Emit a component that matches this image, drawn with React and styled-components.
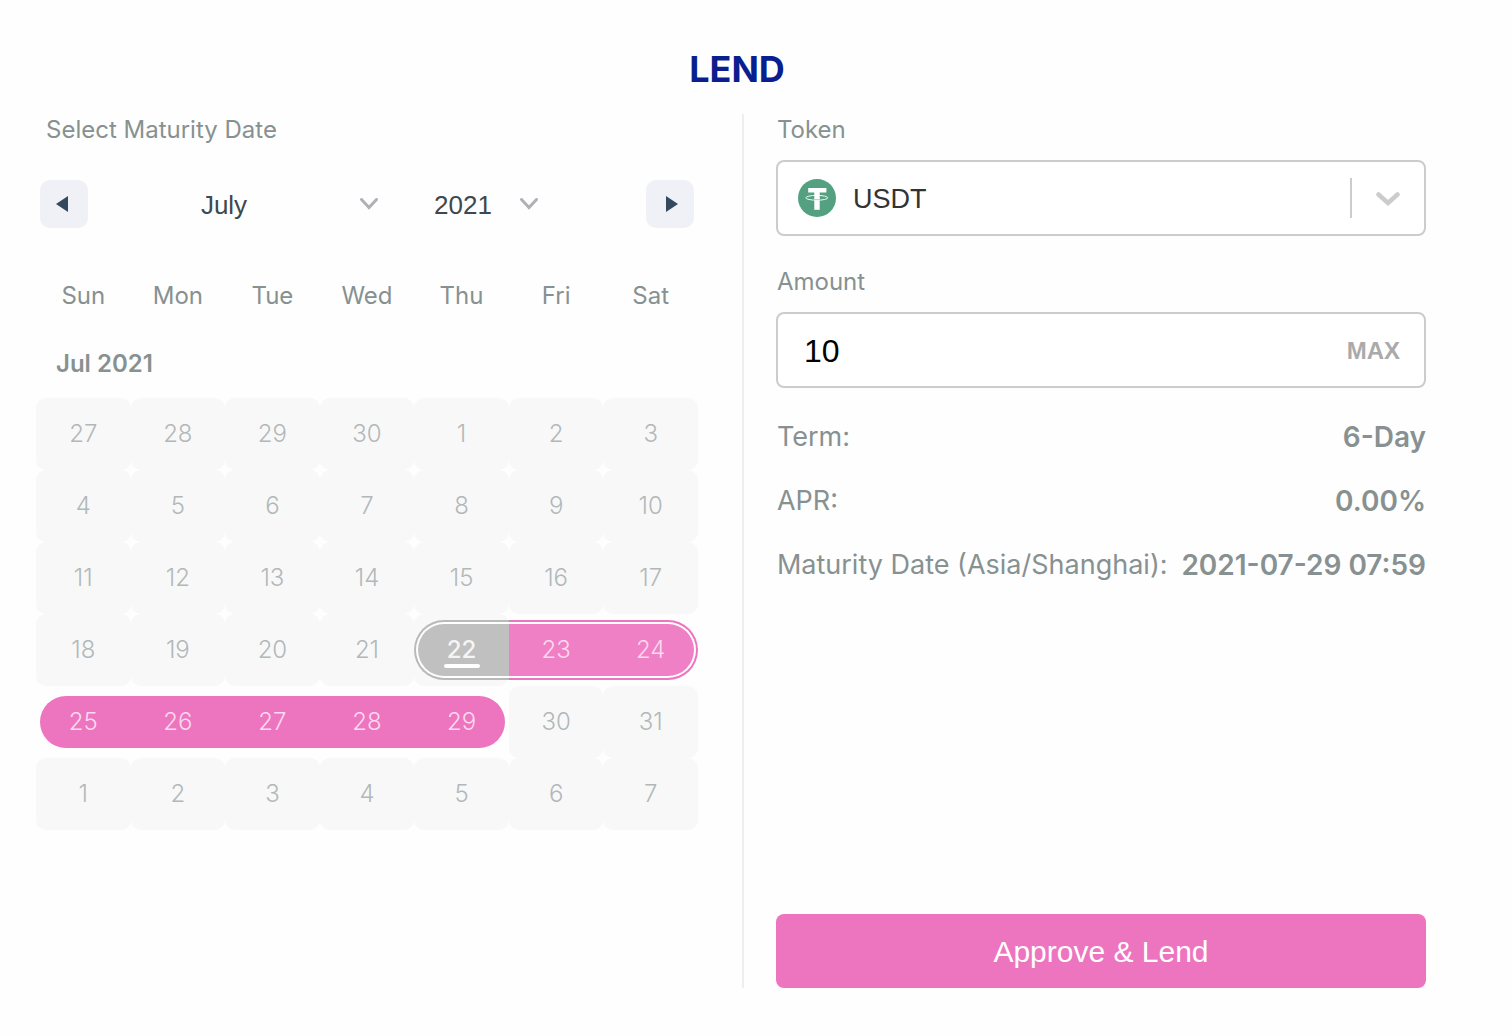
import React, { useState } from 'react';
import styled, { createGlobalStyle, css } from 'styled-components';

const GlobalStyle = createGlobalStyle`
  * {
    box-sizing: border-box;
  }

  body {
    margin: 0;
    background: #fefefe;
    color: #879191;
    font-family: Inter, sans-serif;
    font-size: 24px;
  }

  button,
  input,
  select {
    margin: 0;
    font-family: 'Liberation Sans', sans-serif;
  }
`;

const Page = styled.main`
  display: flex;
  flex-direction: column;
  min-height: 100vh;
  padding: 48px 74px 48px 36px;
`;

const Title = styled.h1`
  margin: 0 0 24px;
  color: #0a1f8f;
  font-size: 36px;
  font-weight: 700;
  line-height: 42px;
  text-align: center;
`;

const Columns = styled.div`
  display: grid;
  grid-template-columns: minmax(0, 51fr) minmax(0, 50fr);
  flex: 1;
`;

const DatePanel = styled.section`
  padding-right: 44px;
  border-right: 2px solid #eeeeee;
`;

const FormPanel = styled.form`
  display: flex;
  flex-direction: column;
  padding: 0 12px 0 32px;
`;

const PanelTitle = styled.h2`
  margin: 0 0 34px;
  padding-left: 10px;
  font-size: 24px;
  font-weight: 400;
  line-height: 32px;
`;

const CalendarHeader = styled.div`
  display: flex;
  align-items: center;
  justify-content: space-between;
  padding: 0 4px;
  margin-bottom: 50px;
`;

const ArrowButton = styled.button`
  display: flex;
  align-items: center;
  justify-content: center;
  width: 48px;
  height: 48px;
  padding: 0;
  border: none;
  border-radius: 10px;
  background: #f0f1f6;
  cursor: pointer;
`;

const Pickers = styled.div`
  display: flex;
  flex: 1;
  padding-left: 6px;
  gap: 18px;
`;

const Picker = styled.div`
  position: relative;
  flex: 0 1 ${({ width }) => width};

  svg {
    position: absolute;
    top: 18px;
    right: 16px;
    pointer-events: none;
  }
`;

const PickerSelect = styled.select`
  appearance: none;
  width: 100%;
  height: 48px;
  padding: 2px 60px 0 20px;
  border: none;
  background: transparent;
  color: #3e484f;
  font-size: 26px;
  text-align: center;
  text-align-last: center;
`;

const Weekdays = styled.div`
  display: grid;
  grid-template-columns: repeat(7, 1fr);
  font-size: 24px;
  line-height: 36px;
  text-align: center;
`;

const MonthName = styled.h3`
  margin: 32px 0 16px;
  padding-left: 20px;
  font-size: 24px;
  font-weight: 600;
  line-height: 36px;
`;

const Days = styled.div`
  display: grid;
  grid-template-columns: repeat(7, 1fr);
  grid-auto-rows: 72px;
`;

const leftRound = css`
  border-top-left-radius: 30px;
  border-bottom-left-radius: 30px;
`;

const rightRound = css`
  border-top-right-radius: 30px;
  border-bottom-right-radius: 30px;
`;

const DayButton = styled.button`
  position: relative;
  padding: 0 0 2px;
  border: none;
  border-radius: 10px;
  background: ${({ $passive }) => ($passive ? '#f8f8f8' : 'transparent')};
  color: ${({ $range }) => ($range ? '#fbd9ee' : '#b2b8ba')};
  font-family: Inter, sans-serif;
  font-size: 24px;
  font-weight: 300;
  cursor: pointer;

  ${({ $today }) =>
    $today &&
    css`
      color: #f5f5f5;
      font-weight: 500;
    `}
`;

const Fill = styled.span`
  position: absolute;
  inset: 10px 0;
  left: ${({ $first }) => ($first ? '4px' : '0')};
  right: ${({ $last }) => ($last ? '4px' : '0')};
  background: ${({ $color }) => $color};
  ${({ $first }) => $first && leftRound}
  ${({ $last }) => $last && rightRound}
`;

const Ring = styled.span`
  position: absolute;
  inset: 6px 0;
  border: solid ${({ $color }) => $color};
  border-width: 2px 0;
  background: #ffffff;

  ${({ $first }) =>
    $first &&
    css`
      border-left-width: 2px;
      ${leftRound}
    `}

  ${({ $last }) =>
    $last &&
    css`
      border-right-width: 2px;
      ${rightRound}
    `}
`;

const DayNumber = styled.span`
  position: relative;
`;

const TodayMark = styled.span`
  position: absolute;
  bottom: 18px;
  left: 50%;
  width: 36px;
  height: 4px;
  border-radius: 2px;
  background: #ffffff;
  transform: translateX(-50%);
`;

const Label = styled.label`
  margin-bottom: 14px;
  padding-left: 1px;
  font-size: 24px;
  line-height: 32px;
`;

const Field = styled.div`
  position: relative;
  display: flex;
  align-items: center;
  height: 76px;
  margin-bottom: 30px;
  border: 2px solid #cccccc;
  border-radius: 8px;
  background: #ffffff;
`;

const TokenSelect = styled.select`
  appearance: none;
  width: 100%;
  height: 100%;
  padding: 2px 92px 0 75px;
  border: none;
  border-radius: 8px;
  background: transparent;
  color: #333333;
  font-size: 27px;
`;

const TokenIcon = styled.svg`
  position: absolute;
  left: 20px;
  top: 17px;
  pointer-events: none;
`;

const Indicator = styled.span`
  position: absolute;
  top: 16px;
  right: 0;
  display: flex;
  align-items: center;
  justify-content: center;
  width: 74px;
  height: 40px;
  border-left: 2px solid #cccccc;
  pointer-events: none;
`;

const AmountInput = styled.input`
  flex: 1;
  min-width: 0;
  height: 100%;
  padding: 2px 0 0 26px;
  border: none;
  border-radius: 8px;
  background: transparent;
  color: #000000;
  font-size: 32px;
`;

const MaxButton = styled.button`
  padding: 10px 24px 8px;
  border: none;
  background: transparent;
  color: #aaaaaa;
  font-size: 24px;
  font-weight: 700;
  cursor: pointer;
`;

const Details = styled.dl`
  display: flex;
  flex-direction: column;
  gap: 30px;
  margin: 2px 0 32px;
`;

const DetailRow = styled.div`
  display: flex;
  justify-content: space-between;
  padding-left: 1px;
  font-size: 27px;
  line-height: 34px;
  white-space: nowrap;

  dd {
    margin: 0;
    font-size: 28px;
    font-weight: 600;
  }
`;

const SubmitButton = styled.button`
  height: 74px;
  margin-top: auto;
  padding: 2px 0 0;
  border: none;
  border-radius: 8px;
  background: #ed75bf;
  color: #ffffff;
  font-size: 30px;
  cursor: pointer;
`;

const PINK = '#ed75bf';
const LIGHT_PINK = '#f080c5';
const GREY = '#c0c0c0';

const WEEKDAYS = ['Sun', 'Mon', 'Tue', 'Wed', 'Thu', 'Fri', 'Sat'];

const MONTHS = [
  'January',
  'February',
  'March',
  'April',
  'May',
  'June',
  'July',
  'August',
  'September',
  'October',
  'November',
  'December',
];

const getDays = () =>
  Array.from({ length: 42 }, (_, i) => {
    const date = new Date(2021, 5, 27 + i);
    const day = date.getDate();
    const range = date.getMonth() === 6 && day >= 22 && day <= 29;
    return {
      key: i,
      day,
      range,
      today: range && day === 22,
      ring: range && day <= 24,
      first: day === 22 || day === 25,
      last: day === 24 || day === 29,
    };
  });

const details = [
  { label: 'Term:', value: '6-Day' },
  { label: 'APR:', value: '0.00%' },
  { label: 'Maturity Date (Asia/Shanghai):', value: '2021-07-29 07:59' },
];

const Chevron = () => (
  <svg width="18" height="12" viewBox="0 0 18 12" fill="none">
    <path
      d="M1.5 1.5 9 9.5l7.5-8"
      stroke="#aeb1b5"
      strokeWidth="3"
      strokeLinecap="round"
    />
  </svg>
);

const Day = ({ day, range, today, ring, first, last }) => {
  let color = ring ? LIGHT_PINK : PINK;
  if (today) color = GREY;

  return (
    <DayButton type="button" $passive={!range || today} $range={range} $today={today}>
      {ring && <Ring $color={today ? '#b9b9b9' : PINK} $first={first} $last={last} />}
      {range && <Fill $color={color} $first={first} $last={last} />}
      <DayNumber>{day}</DayNumber>
      {today && <TodayMark />}
    </DayButton>
  );
};

const Calendar = () => {
  const [month, setMonth] = useState('July');
  const [year, setYear] = useState('2021');

  return (
    <>
      <CalendarHeader>
        <ArrowButton type="button" aria-label="Previous month">
          <svg width="24" height="24" viewBox="0 0 24 24">
            <path d="M16 4v16L4 12z" fill="#34495e" />
          </svg>
        </ArrowButton>
        <Pickers>
          <Picker width="300px">
            <PickerSelect
              aria-label="Month"
              value={month}
              onChange={(e) => setMonth(e.target.value)}
            >
              {MONTHS.map((name) => (
                <option key={name}>{name}</option>
              ))}
            </PickerSelect>
            <Chevron />
          </Picker>
          <Picker width="142px">
            <PickerSelect
              aria-label="Year"
              value={year}
              onChange={(e) => setYear(e.target.value)}
            >
              <option>2021</option>
              <option>2022</option>
            </PickerSelect>
            <Chevron />
          </Picker>
        </Pickers>
        <ArrowButton type="button" aria-label="Next month">
          <svg width="24" height="24" viewBox="0 0 24 24">
            <path d="M8 4v16l12-8z" fill="#34495e" />
          </svg>
        </ArrowButton>
      </CalendarHeader>
      <Weekdays>
        {WEEKDAYS.map((name) => (
          <span key={name}>{name}</span>
        ))}
      </Weekdays>
      <MonthName>Jul 2021</MonthName>
      <Days>
        {getDays().map(({ key, ...day }) => (
          <Day key={key} {...day} />
        ))}
      </Days>
    </>
  );
};

const App = () => {
  const [amount, setAmount] = useState('10');

  return (
    <>
      <GlobalStyle />
      <Page>
        <Title>LEND</Title>
        <Columns>
          <DatePanel>
            <PanelTitle>Select Maturity Date</PanelTitle>
            <Calendar />
          </DatePanel>
          <FormPanel onSubmit={(e) => e.preventDefault()}>
            <Label htmlFor="token">Token</Label>
            <Field>
              <TokenSelect id="token" defaultValue="USDT">
                <option>USDT</option>
              </TokenSelect>
              <TokenIcon width="38" height="38" viewBox="0 0 38 38">
                <circle cx="19" cy="19" r="19" fill="#53a180" />
                <ellipse
                  cx="18.8"
                  cy="18.8"
                  rx="11"
                  ry="2.4"
                  fill="none"
                  stroke="#ffffff"
                  strokeWidth="0.9"
                />
                <path d="M10.2 9h18.200v4.600h-6.700v6.200h-5.400v-6.200h-6.100z" fill="#ffffff" />
                <path d="M16.300 21.200h5.400v9.600h-5.400z" fill="#ffffff" />
                <path d="M16.300 19h5.400v1.400h-5.400z" fill="#ffffff" />
              </TokenIcon>
              <Indicator>
                <svg width="24" height="16" viewBox="0 0 24 16" fill="none">
                  <path
                    d="M2.5 4.500 12 13l9.500-8.500"
                    stroke="#cccccc"
                    strokeWidth="4.500"
                    strokeLinecap="round"
                  />
                </svg>
              </Indicator>
            </Field>
            <Label htmlFor="amount">Amount</Label>
            <Field>
              <AmountInput
                id="amount"
                value={amount}
                onChange={(e) => setAmount(e.target.value)}
              />
              <MaxButton type="button">MAX</MaxButton>
            </Field>
            <Details>
              {details.map(({ label, value }) => (
                <DetailRow key={label}>
                  <dt>{label}</dt>
                  <dd>{value}</dd>
                </DetailRow>
              ))}
            </Details>
            <SubmitButton type="submit">Approve &amp; Lend</SubmitButton>
          </FormPanel>
        </Columns>
      </Page>
    </>
  );
};

export default App;
